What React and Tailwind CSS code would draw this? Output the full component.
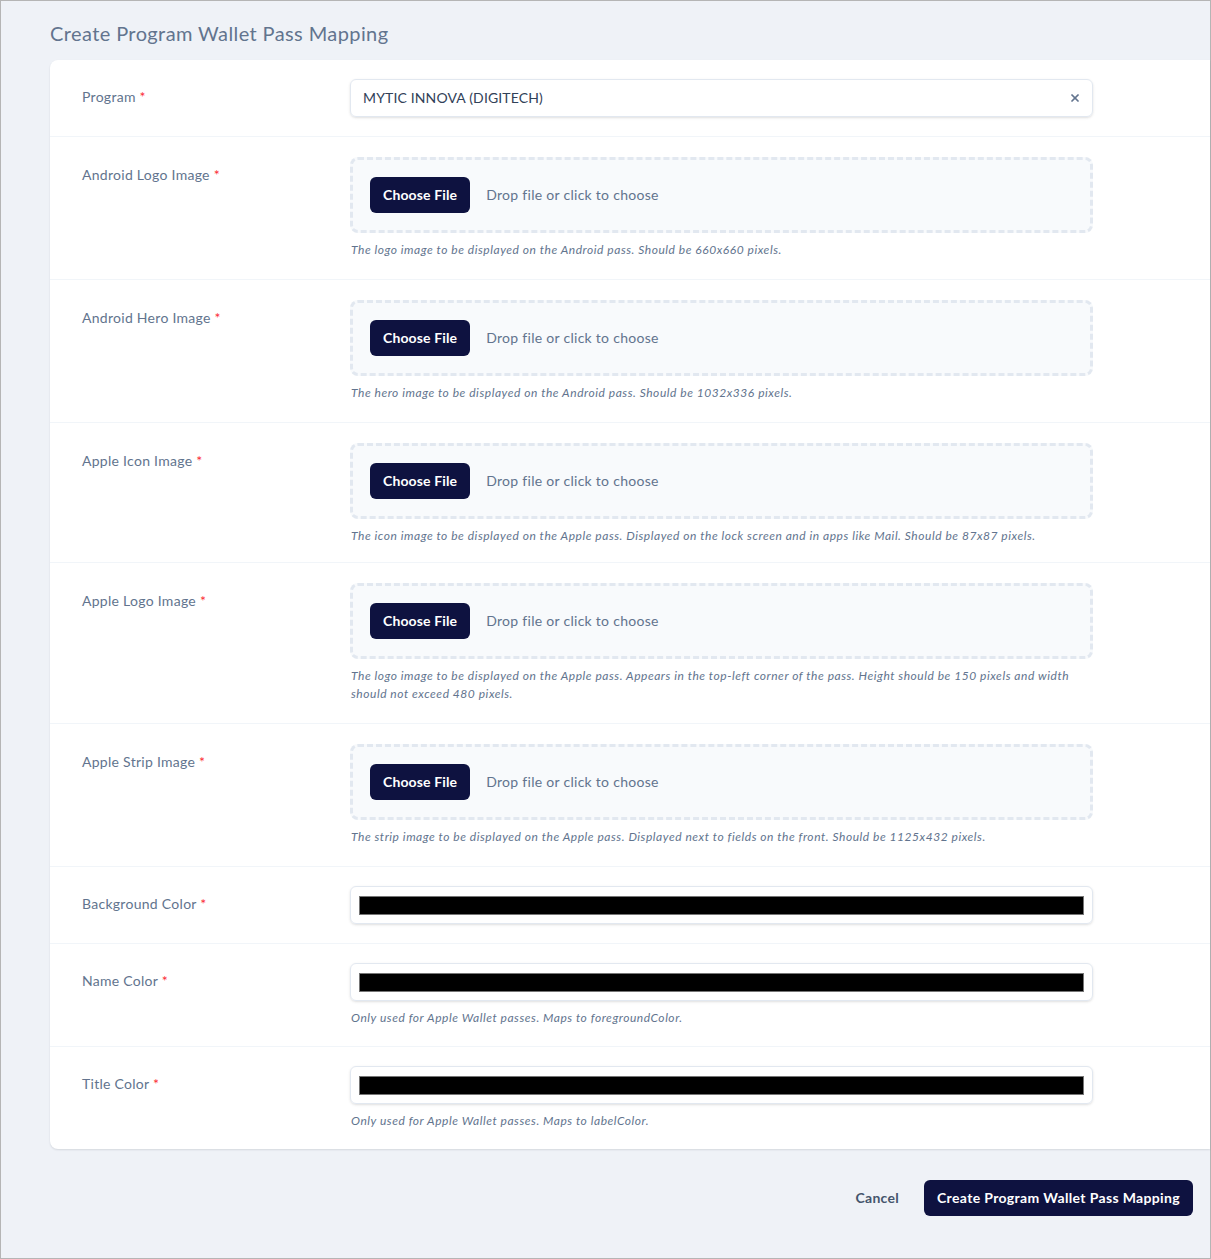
import { X } from 'lucide-react';

const fileFields = [
	{ label: 'Android Logo Image', help: 'The logo image to be displayed on the Android pass. Should be 660x660 pixels.' },
	{ label: 'Android Hero Image', help: 'The hero image to be displayed on the Android pass. Should be 1032x336 pixels.' },
	{ label: 'Apple Icon Image', help: 'The icon image to be displayed on the Apple pass. Displayed on the lock screen and in apps like Mail. Should be 87x87 pixels.', tight: true },
	{ label: 'Apple Logo Image', help: 'The logo image to be displayed on the Apple pass. Appears in the top-left corner of the pass. Height should be 150 pixels and width should not exceed 480 pixels.' },
	{ label: 'Apple Strip Image', help: 'The strip image to be displayed on the Apple pass. Displayed next to fields on the front. Should be 1125x432 pixels.' }
];

const colorFields = [
	{ label: 'Background Color' },
	{ label: 'Name Color', help: 'Only used for Apple Wallet passes. Maps to foregroundColor.' },
	{ label: 'Title Color', help: 'Only used for Apple Wallet passes. Maps to labelColor.' }
];

function Row({ label, help, last, file, tight, children }) {
	const pad = file ? (tight ? 'pt-5 pb-[17px]' : 'py-5') : 'py-[19px]';
	return (
		<div className={`flex pl-8 ${pad} ${last ? '' : 'border-b border-slate-100'}`}>
			<div className="w-[268px] shrink-0 pt-2 text-sm leading-5 tracking-[0.02em] text-slate-500">
				{label} <span className="text-red-500">*</span>
			</div>
			<div className="w-[743px]">
				{children}
				{help && (
					<p className="mt-2 pl-px text-xs italic leading-[18px] tracking-[0.045em] text-slate-500">{help}</p>
				)}
			</div>
		</div>
	);
}

export default function App() {
	return (
		<div
			className="w-[1211px] h-[1259px] border border-[#b5b5b5] bg-[#eff2f7] flex flex-col"
			style={{ fontFamily: 'Lato, "Open Sans", sans-serif' }}
		>
			{/* Titre */}
			<h1 className="pl-[49px] pt-[18px] pb-[13px] text-xl leading-7 tracking-[0.02em] text-slate-500">
				Create Program Wallet Pass Mapping
			</h1>

			{/* Carte */}
			<div className="ml-[49px] bg-white rounded-l-lg shadow-[0_1px_2px_rgba(15,23,42,0.12)]">
				<Row label="Program">
					<div className="h-[38px] flex items-center justify-between pl-3 pr-[11px] border border-slate-200 rounded-md shadow-sm text-sm tracking-[0.01em] text-slate-700">
						<span>MYTIC INNOVA (DIGITECH)</span>
						<X className="w-3 h-3 text-slate-500" strokeWidth={3.5} />
					</div>
				</Row>

				{fileFields.map((f) => (
					<Row key={f.label} label={f.label} help={f.help} tight={f.tight} file>
						<div className="h-[76px] flex items-center gap-4 pl-[17px] border-[3px] border-dashed border-slate-200 bg-slate-50 rounded-lg">
							<button className="h-9 px-[13px] rounded-md bg-[#0e1240] text-white text-sm font-bold tracking-[0.01em]">
								Choose File
							</button>
							<span className="text-sm tracking-[0.02em] text-slate-500">Drop file or click to choose</span>
						</div>
					</Row>
				))}

				{colorFields.map((f, i) => (
					<Row key={f.label} label={f.label} help={f.help} last={i === colorFields.length - 1}>
						<div className="h-[38px] flex items-center px-2 border border-slate-200 rounded-md shadow-sm">
							<div className="h-[19px] w-full bg-black border border-[#767676]" />
						</div>
					</Row>
				))}
			</div>

			{/* Actions */}
			<div className="flex justify-end items-center gap-[25px] pr-[17px] mt-[31px]">
				<button className="text-sm font-bold tracking-[0.02em] text-slate-600">Cancel</button>
				<button className="h-9 px-[13px] rounded-md bg-[#0e1240] text-white text-sm font-bold tracking-[0.025em]">
					Create Program Wallet Pass Mapping
				</button>
			</div>
		</div>
	);
}
